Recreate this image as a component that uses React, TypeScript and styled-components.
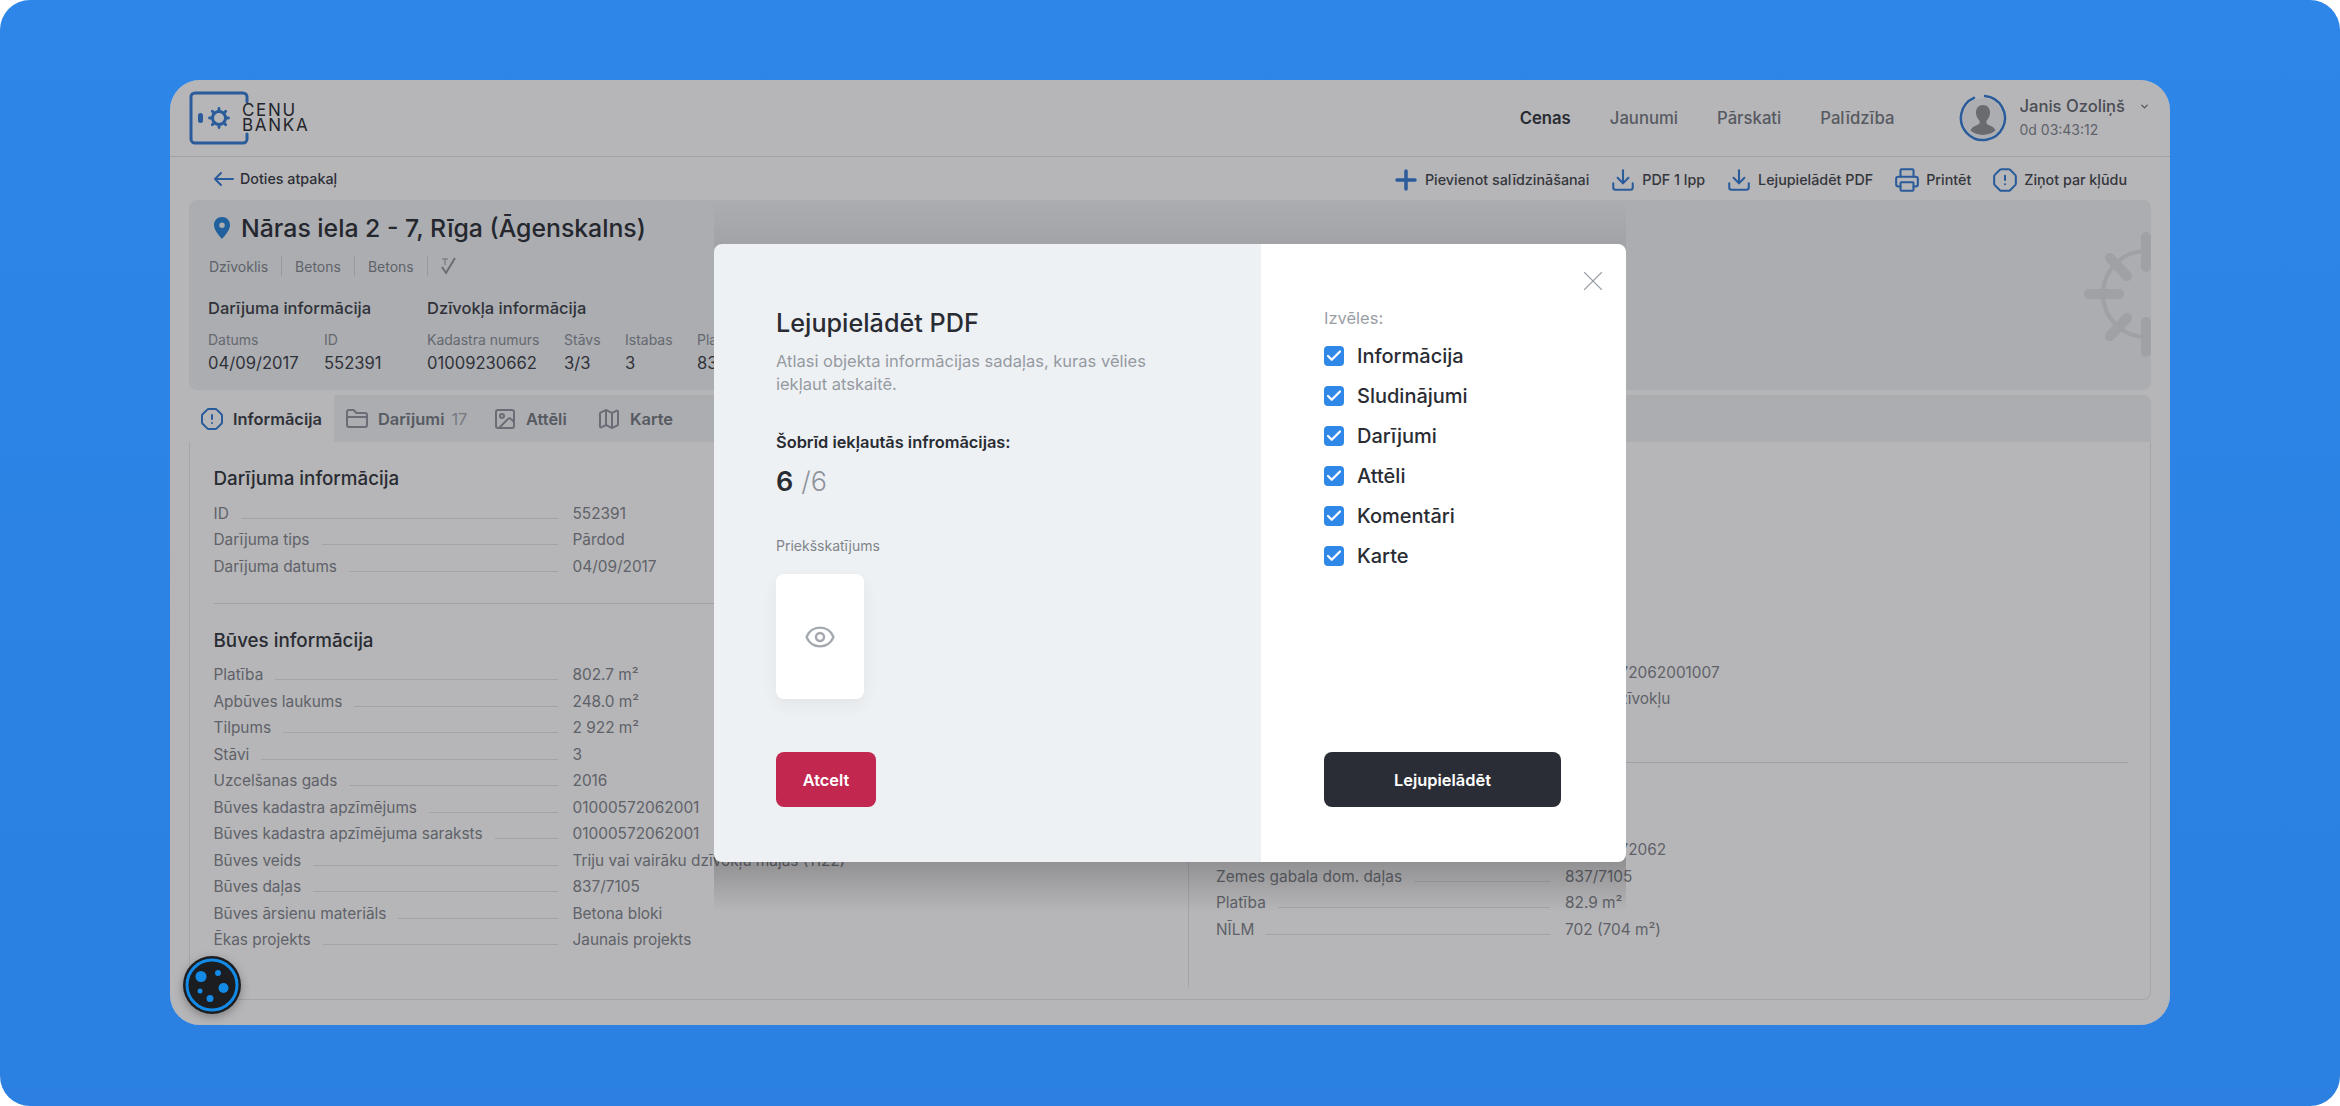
import { ReactNode } from 'react';
import styled, { createGlobalStyle } from 'styled-components';
import { Check, ChevronDown, Download, Eye, FolderClosed, Image, Map, OctagonAlert, Printer, X } from 'lucide-react';

const GlobalStyle = createGlobalStyle`
  html, body {
    margin: 0;
    background: #ffffff;
  }

  body {
    font-family: Inter, "Liberation Sans", sans-serif;
    color: #2a2d35;
  }

  * {
    box-sizing: border-box;
  }
`;

const Page = styled.div`
  width: 2340px;
  height: 1106px;
  padding: 80px 170px 81px;
  border-radius: 30px;
  background: linear-gradient(180deg, #2d86e8 0%, #2b80e1 100%);
  overflow: hidden;
`;

const Window = styled.div`
  position: relative;
  width: 2000px;
  height: 945px;
  display: flex;
  flex-direction: column;
  border-radius: 30px;
  background: #ffffff;
  overflow: hidden;
`;

const Header = styled.header`
  height: 77px;
  flex-shrink: 0;
  display: flex;
  align-items: center;
  padding: 0 20px 0 19px;
  border-bottom: 1px solid #dfe1e7;
`;

const Logo = styled.div`
  display: flex;
  align-items: center;
`;

const LogoWords = styled.div`
  margin-left: -7px;
  font-size: 17px;
  line-height: 15px;
  letter-spacing: 1.7px;
  color: #20232a;
`;

const Nav = styled.nav`
  margin-left: auto;
  display: flex;
  gap: 39px;
`;

const NavLink = styled.a<{ $active?: boolean }>`
  font-size: 16.7px;
  font-weight: ${props => (props.$active ? 600 : 500)};
  color: ${props => (props.$active ? '#2a2d35' : '#70747c')};
`;

const User = styled.div`
  margin-left: 65px;
  display: flex;
  align-items: center;
  gap: 12px;
`;

const UserText = styled.div`
  display: flex;
  flex-direction: column;
  gap: 5px;
`;

const UserName = styled.div`
  display: flex;
  align-items: center;
  gap: 14px;
  font-size: 16.6px;
  line-height: 19px;
  font-weight: 500;
  color: #5d6068;
`;

const UserTime = styled.div`
  font-size: 14px;
  line-height: 18px;
  color: #7e828a;
`;

const Toolbar = styled.div`
  height: 43px;
  flex-shrink: 0;
  display: flex;
  align-items: center;
  padding: 0 43px;
  font-size: 14.3px;
  font-weight: 500;
  color: #3a3d45;
`;

const BackLink = styled.a`
  display: flex;
  align-items: center;
  gap: 6px;
  color: #2f323a;
`;

const ToolbarActions = styled.div`
  margin-left: auto;
  padding-top: 2px;
  display: flex;
  align-items: center;
  gap: 21px;
`;

const ToolbarAction = styled.a`
  display: flex;
  align-items: center;
  gap: 6px;

  svg {
    color: #2b76d2;
  }
`;

const Hero = styled.section`
  position: relative;
  height: 190px;
  flex-shrink: 0;
  margin: 0 19px;
  padding: 12px 19px 0;
  border-radius: 8px;
  background: #eef1f4;
  overflow: hidden;
`;

const HeroDecor = styled.svg`
  position: absolute;
  top: 28px;
  right: 0;
`;

const HeroTitle = styled.h1`
  margin: 0;
  display: flex;
  align-items: center;
  gap: 10px;
  padding-left: 5px;
  font-size: 24.8px;
  line-height: 32px;
  font-weight: 500;
  color: #24272e;
`;

const TagRow = styled.div`
  margin-top: 12px;
  height: 20px;
  padding-left: 1px;
  display: flex;
  align-items: center;
  font-size: 14px;
  color: #7c8188;
`;

const Tag = styled.span`
  display: flex;
  align-items: center;
  height: 20px;
  padding-right: 13px;
  margin-right: 13px;
  border-right: 1px solid #cfd3d8;
`;

const HeroGroups = styled.div`
  margin-top: 22px;
  display: flex;
`;

const HeroGroup = styled.div<{ $width: number }>`
  width: ${props => props.$width}px;
  flex-shrink: 0;
`;

const HeroGroupTitle = styled.div`
  font-size: 16.5px;
  line-height: 20px;
  font-weight: 500;
  color: #343740;
`;

const HeroFacts = styled.div`
  margin-top: 13px;
  display: flex;
`;

const HeroFact = styled.div<{ $width: number }>`
  width: ${props => props.$width}px;
  flex-shrink: 0;
`;

const HeroLabel = styled.div`
  font-size: 14px;
  line-height: 18px;
  color: #858a91;
  white-space: nowrap;
`;

const HeroValue = styled.div`
  margin-top: 3px;
  font-size: 16.6px;
  line-height: 22px;
  color: #34373f;
  white-space: nowrap;
`;

const Panel = styled.section`
  flex: 1;
  margin: 5px 19px 25px;
  display: flex;
  flex-direction: column;
  border: 1px solid #e4e6ea;
  border-top: none;
  border-radius: 8px;
`;

const TabBar = styled.div`
  height: 47px;
  flex-shrink: 0;
  display: flex;
  margin: 0 -1px;
  border-radius: 8px 8px 0 0;
  background: #eef1f4;
  overflow: hidden;
`;

const Tab = styled.div<{ $active?: boolean; $width: number }>`
  width: ${props => props.$width}px;
  display: flex;
  align-items: center;
  gap: 9px;
  padding-left: 11px;
  font-size: 16.4px;
  font-weight: 600;
  color: ${props => (props.$active ? '#34373f' : '#70747c')};
  background: ${props => (props.$active ? '#ffffff' : 'transparent')};

  svg {
    color: ${props => (props.$active ? '#2b76d2' : '#8c9199')};
  }
`;

const TabCount = styled.span`
  margin-left: -2px;
  font-weight: 400;
  color: #a0a4aa;
`;

const Columns = styled.div`
  flex: 1;
  display: grid;
  grid-template-columns: 999px 1fr;
  padding-bottom: 12px;
`;

const Column = styled.div<{ $first?: boolean }>`
  padding: 0 ${props => (props.$first ? '24px' : '22px')} 0 ${props => (props.$first ? '23.5px' : '27px')};
  border-right: ${props => (props.$first ? '1px solid #e2e4e8' : 'none')};
`;

const Section = styled.div`
  padding: 23px 0;
  border-bottom: 1px solid #dcdee2;

  &:last-child {
    border-bottom: none;
  }
`;

const SectionTitle = styled.h2<{ $gap?: number }>`
  margin: 0 0 ${props => props.$gap ?? 7}px;
  font-size: 18.8px;
  line-height: 28px;
  font-weight: 500;
  color: #2a2d35;
`;

const Row = styled.div<{ $labelWidth: number }>`
  height: 26.5px;
  display: grid;
  grid-template-columns: ${props => props.$labelWidth}px 1fr;
  column-gap: 15px;
  align-items: center;
  font-size: 15.4px;
  color: #7c8087;
`;

const RowLabel = styled.div`
  display: flex;
  align-items: flex-end;
  gap: 12px;
  white-space: nowrap;
`;

const RowLeader = styled.span`
  flex: 1;
  height: 1px;
  margin-bottom: 4px;
  background: #e2e4e8;
`;

const RowValue = styled.div`
  white-space: nowrap;
`;

const Overlay = styled.div`
  position: absolute;
  inset: 0;
  padding-top: 1px;
  display: flex;
  align-items: center;
  justify-content: center;
  background: rgba(40, 42, 46, 0.34);
`;

const Modal = styled.div`
  position: relative;
  width: 912px;
  height: 618px;
  display: grid;
  grid-template-columns: 547px 365px;

  &::before {
    content: '';
    position: absolute;
    top: -44px;
    bottom: -50px;
    left: 0;
    right: 0;
    background: linear-gradient(180deg, rgba(0, 0, 0, 0) 0, rgba(0, 0, 0, 0.06) 44px, rgba(0, 0, 0, 0.2) 618px, rgba(0, 0, 0, 0.2) 662px, rgba(0, 0, 0, 0) 100%);
  }
`;

const ModalSide = styled.div<{ $tinted?: boolean }>`
  position: relative;
  display: flex;
  flex-direction: column;
  padding: 64px 65px 55px ${props => (props.$tinted ? 62 : 63)}px;
  background: ${props => (props.$tinted ? '#eef1f4' : '#ffffff')};
  border-radius: ${props => (props.$tinted ? '8px 0 0 8px' : '0 8px 8px 0')};
`;

const CloseButton = styled.button`
  position: absolute;
  top: 20px;
  right: 16px;
  width: 34px;
  height: 34px;
  padding: 0;
  display: flex;
  align-items: center;
  justify-content: center;
  border: none;
  background: none;
  color: #9ba0a6;
`;

const ModalTitle = styled.h2`
  margin: 0;
  font-size: 25.2px;
  line-height: 30px;
  font-weight: 500;
  color: #292c33;
`;

const ModalText = styled.p`
  margin: 12px 0 0;
  width: 410px;
  font-size: 16.5px;
  line-height: 23px;
  color: #959aa1;
`;

const IncludedLabel = styled.div`
  margin-top: 35px;
  font-size: 16.4px;
  line-height: 22px;
  font-weight: 600;
  color: #292c33;
`;

const IncludedCount = styled.div`
  margin-top: 12px;
  font-size: 27px;
  line-height: 34px;
  font-weight: 600;
  color: #292c33;

  span {
    margin-left: 8px;
    font-weight: 300;
    color: #8f949b;
  }
`;

const PreviewLabel = styled.div`
  margin-top: 38px;
  font-size: 14px;
  line-height: 18px;
  color: #7f848b;
`;

const PreviewCard = styled.div`
  margin-top: 19px;
  width: 88px;
  height: 125px;
  display: flex;
  align-items: center;
  justify-content: center;
  border-radius: 8px;
  background: #ffffff;
  box-shadow: 0 6px 16px rgba(40, 44, 52, 0.06);
  color: #a3a8ae;
`;

const ModalButton = styled.button<{ $color: string; $width: number }>`
  margin-top: auto;
  width: ${props => props.$width}px;
  height: 55px;
  border: none;
  border-radius: 8px;
  background: ${props => props.$color};
  color: #ffffff;
  font-family: inherit;
  font-size: 16.4px;
  font-weight: 600;
`;

const OptionsLabel = styled.div`
  font-size: 16.5px;
  line-height: 20px;
  color: #9a9ea5;
`;

const Options = styled.div`
  margin-top: 8px;
  display: flex;
  flex-direction: column;
`;

const Option = styled.label`
  height: 40px;
  display: flex;
  align-items: center;
  gap: 13px;
  font-size: 20px;
  font-weight: 500;
  color: #292c33;
`;

const OptionBox = styled.span`
  width: 20px;
  height: 20px;
  display: flex;
  align-items: center;
  justify-content: center;
  border-radius: 4px;
  background: #2f88e8;
  color: #ffffff;
`;

const CookieBadge = styled.div`
  position: absolute;
  left: 13px;
  bottom: 11px;
  width: 58px;
  height: 58px;
  border-radius: 50%;
  background: #1c1d20;
  box-shadow: 0 3px 10px rgba(0, 0, 0, 0.3);
`;

function LogoMark() {
  return (
    <svg width="60" height="54" viewBox="0 0 60 54" fill="none">
      <path d="M58 11V6a4 4 0 0 0-4-4H6a4 4 0 0 0-4 4v42a4 4 0 0 0 4 4h48a4 4 0 0 0 4-4v-5" stroke="#2b76d2" strokeWidth="3" strokeLinecap="round" />
      <rect x="9" y="22" width="5" height="10" rx="2.5" fill="#2b76d2" />
      <g stroke="#2b76d2" strokeLinecap="round">
        <circle cx="30" cy="27" r="6.500" strokeWidth="3" />
        <path strokeWidth="2.800" d="M30 17.500v2M30 34.500v2M20.500 27h2M37.500 27h2M23.300 20.300l1.400 1.400M35.300 32.300l1.400 1.400M36.700 20.300l-1.400 1.400M24.700 32.300l-1.400 1.400" />
      </g>
    </svg>
  );
}

function Avatar() {
  return (
    <svg width="48" height="48" viewBox="0 0 48 48" fill="none">
      <circle cx="24" cy="24" r="20" fill="#eef1f4" />
      <path d="M24 11c-4.500 0-7 3.400-7 7.500 0 3.500 1.600 6.500 3.500 8v3c-1.500 2-7.500 2.500-9 7a20 20 0 0 0 25 0c-1.500-4.500-7.500-5-9-7v-3c1.900-1.500 3.500-4.500 3.500-8 0-4.100-2.500-7.500-7-7.500z" fill="#8a8d91" />
      <path d="M26 2.100A22 22 0 1 1 15 3.900" stroke="#2b76d2" strokeWidth="2.500" strokeLinecap="round" />
    </svg>
  );
}

function BackArrow() {
  return (
    <svg width="21" height="16" viewBox="0 0 21 16" fill="none" stroke="#2b76d2" strokeWidth="2" strokeLinecap="round" strokeLinejoin="round">
      <path d="M20 8H2M8 2L2 8l6 6" />
    </svg>
  );
}

function PlusMark() {
  return (
    <svg width="26" height="26" viewBox="0 0 26 26" fill="none" stroke="currentColor" strokeWidth="3.500" strokeLinecap="round">
      <path d="M13 4v18M4 13h18" />
    </svg>
  );
}

function PinIcon() {
  return (
    <svg width="18" height="24" viewBox="0 0 18 24">
      <path fillRule="evenodd" clipRule="evenodd" d="M9 1c4.600 0 8 3.500 8 8 0 5-4.800 10.500-8 14-3.200-3.500-8-9-8-14 0-4.500 3.400-8 8-8zm0 5.500A2.700 2.700 0 1 0 9 12a2.700 2.700 0 0 0 0-5.500z" fill="#1c7ed6" />
    </svg>
  );
}

function VerifiedMark() {
  return (
    <svg width="16" height="18" viewBox="0 0 16 18" fill="none" stroke="#8d9197">
      <path d="M1 2h6M4 2v6" strokeWidth="1" />
      <path d="M1 10l4 6 9-15" strokeWidth="2" />
    </svg>
  );
}

function WheelDecor() {
  return (
    <HeroDecor width="71" height="134" viewBox="0 0 71 134" fill="none" stroke="#dcdfe2" strokeLinecap="round">
      <circle cx="66" cy="66" r="43" strokeWidth="4" />
      <g strokeWidth="10">
        <path d="M66 9v30M66 94v30M9 66h30M30 30l17 18M47 90l-17 18" />
      </g>
    </HeroDecor>
  );
}

function CookieMark() {
  return (
    <svg width="58" height="58" viewBox="0 0 58 58" fill="#138ae6">
      <circle cx="29" cy="29" r="25" fill="none" stroke="#138ae6" strokeWidth="3" />
      <circle cx="18" cy="20.500" r="5.500" />
      <circle cx="35" cy="17" r="3" />
      <circle cx="40.500" cy="32" r="5" />
      <circle cx="17" cy="35" r="2.500" />
      <circle cx="27" cy="42.500" r="3.500" />
    </svg>
  );
}

interface FactRow {
  label: string;
  value: ReactNode;
}

const dealRows: FactRow[] = [
  { label: 'ID', value: '552391' },
  { label: 'Darījuma tips', value: 'Pārdod' },
  { label: 'Darījuma datums', value: '04/09/2017' },
];

const buildingRows: FactRow[] = [
  { label: 'Platība', value: '802.7 m²' },
  { label: 'Apbūves laukums', value: '248.0 m²' },
  { label: 'Tilpums', value: '2 922 m²' },
  { label: 'Stāvi', value: '3' },
  { label: 'Uzcelšanas gads', value: '2016' },
  { label: 'Būves kadastra apzīmējums', value: '01000572062001' },
  { label: 'Būves kadastra apzīmējuma saraksts', value: '01000572062001' },
  { label: 'Būves veids', value: 'Triju vai vairāku dzīvokļu mājas (1122)' },
  { label: 'Būves daļas', value: '837/7105' },
  { label: 'Būves ārsienu materiāls', value: 'Betona bloki' },
  { label: 'Ēkas projekts', value: 'Jaunais projekts' },
];

const flatRows: FactRow[] = [
  { label: 'Adrese', value: 'Rīga' },
  { label: 'Stāvs', value: '3/3' },
  { label: 'Istabas', value: '3' },
  { label: 'Platība', value: '83 m²' },
  { label: 'Dzīvokļa daļas', value: '837' },
  { label: 'Kopējā platība', value: '83 m²' },
  { label: 'Telpu grupas kadastra apzīmējums', value: '01000572062001007' },
  { label: 'Telpu grupas lietošanas veids', value: 'Piecu dzīvokļu' },
  { label: 'Telpu skaits', value: '3' },
];

const landRows: FactRow[] = [
  { label: 'Zemes kadastra numurs', value: '01000572062' },
  { label: 'Zemes gabala dom. daļas', value: '837/7105' },
  { label: 'Platība', value: '82.9 m²' },
  { label: 'NĪLM', value: '702 (704 m²)' },
];

const options = ['Informācija', 'Sludinājumi', 'Darījumi', 'Attēli', 'Komentāri', 'Karte'];

function Facts({ rows, labelWidth }: { rows: FactRow[]; labelWidth: number }) {
  return (
    <>
      {rows.map(row => (
        <Row key={row.label} $labelWidth={labelWidth}>
          <RowLabel>
            {row.label}
            <RowLeader />
          </RowLabel>
          <RowValue>{row.value}</RowValue>
        </Row>
      ))}
    </>
  );
}

export default function App() {
  return (
    <Page>
      <GlobalStyle />
      <Window>
        <Header>
          <Logo>
            <LogoMark />
            <LogoWords>
              CENU
              <br />
              BANKA
            </LogoWords>
          </Logo>
          <Nav>
            <NavLink $active>Cenas</NavLink>
            <NavLink>Jaunumi</NavLink>
            <NavLink>Pārskati</NavLink>
            <NavLink>Palīdzība</NavLink>
          </Nav>
          <User>
            <Avatar />
            <UserText>
              <UserName>
                Janis Ozoliņš
                <ChevronDown size={11} strokeWidth={2.5} />
              </UserName>
              <UserTime>0d 03:43:12</UserTime>
            </UserText>
          </User>
        </Header>

        <Toolbar>
          <BackLink>
            <BackArrow />
            Doties atpakaļ
          </BackLink>
          <ToolbarActions>
            <ToolbarAction>
              <PlusMark />
              Pievienot salīdzināšanai
            </ToolbarAction>
            <ToolbarAction>
              <Download size={26} strokeWidth={1.9} />
              PDF 1 lpp
            </ToolbarAction>
            <ToolbarAction>
              <Download size={26} strokeWidth={1.9} />
              Lejupielādēt PDF
            </ToolbarAction>
            <ToolbarAction>
              <Printer size={26} strokeWidth={1.9} />
              Printēt
            </ToolbarAction>
            <ToolbarAction>
              <OctagonAlert size={26} strokeWidth={1.9} />
              Ziņot par kļūdu
            </ToolbarAction>
          </ToolbarActions>
        </Toolbar>

        <Hero>
          <HeroTitle>
            <PinIcon />
            Nāras iela 2 - 7, Rīga (Āgenskalns)
          </HeroTitle>
          <TagRow>
            <Tag>Dzīvoklis</Tag>
            <Tag>Betons</Tag>
            <Tag>Betons</Tag>
            <VerifiedMark />
          </TagRow>
          <HeroGroups>
            <HeroGroup $width={219}>
              <HeroGroupTitle>Darījuma informācija</HeroGroupTitle>
              <HeroFacts>
                <HeroFact $width={116}>
                  <HeroLabel>Datums</HeroLabel>
                  <HeroValue>04/09/2017</HeroValue>
                </HeroFact>
                <HeroFact $width={100}>
                  <HeroLabel>ID</HeroLabel>
                  <HeroValue>552391</HeroValue>
                </HeroFact>
              </HeroFacts>
            </HeroGroup>
            <HeroGroup $width={400}>
              <HeroGroupTitle>Dzīvokļa informācija</HeroGroupTitle>
              <HeroFacts>
                <HeroFact $width={137}>
                  <HeroLabel>Kadastra numurs</HeroLabel>
                  <HeroValue>01009230662</HeroValue>
                </HeroFact>
                <HeroFact $width={61}>
                  <HeroLabel>Stāvs</HeroLabel>
                  <HeroValue>3/3</HeroValue>
                </HeroFact>
                <HeroFact $width={72}>
                  <HeroLabel>Istabas</HeroLabel>
                  <HeroValue>3</HeroValue>
                </HeroFact>
                <HeroFact $width={80}>
                  <HeroLabel>Platība</HeroLabel>
                  <HeroValue>83 m²</HeroValue>
                </HeroFact>
              </HeroFacts>
            </HeroGroup>
          </HeroGroups>
          <WheelDecor />
        </Hero>

        <Panel>
          <TabBar>
            <Tab $active $width={145}>
              <OctagonAlert size={24} strokeWidth={2} />
              Informācija
            </Tab>
            <Tab $width={148}>
              <FolderClosed size={24} strokeWidth={2} />
              Darījumi
              <TabCount>17</TabCount>
            </Tab>
            <Tab $width={104}>
              <Image size={24} strokeWidth={2} />
              Attēli
            </Tab>
            <Tab $width={100}>
              <Map size={24} strokeWidth={2} />
              Karte
            </Tab>
          </TabBar>
          <Columns>
            <Column $first>
              <Section>
                <SectionTitle>Darījuma informācija</SectionTitle>
                <Facts rows={dealRows} labelWidth={344} />
              </Section>
              <Section>
                <SectionTitle>Būves informācija</SectionTitle>
                <Facts rows={buildingRows} labelWidth={344} />
              </Section>
            </Column>
            <Column>
              <Section>
                <SectionTitle>Dzīvoklis</SectionTitle>
                <Facts rows={flatRows} labelWidth={334} />
              </Section>
              <Section>
                <SectionTitle $gap={23}>Zeme</SectionTitle>
                <Facts rows={landRows} labelWidth={334} />
              </Section>
            </Column>
          </Columns>
        </Panel>

        <Overlay>
          <Modal>
            <ModalSide $tinted>
              <ModalTitle>Lejupielādēt PDF</ModalTitle>
              <ModalText>Atlasi objekta informācijas sadaļas, kuras vēlies iekļaut atskaitē.</ModalText>
              <IncludedLabel>Šobrīd iekļautās infromācijas:</IncludedLabel>
              <IncludedCount>
                6<span>/6</span>
              </IncludedCount>
              <PreviewLabel>Priekšskatījums</PreviewLabel>
              <PreviewCard>
                <Eye size={32} strokeWidth={1.8} />
              </PreviewCard>
              <ModalButton $color="#c2274f" $width={100}>Atcelt</ModalButton>
            </ModalSide>
            <ModalSide>
              <CloseButton>
                <X size={34} strokeWidth={0.8} />
              </CloseButton>
              <OptionsLabel>Izvēles:</OptionsLabel>
              <Options>
                {options.map(option => (
                  <Option key={option}>
                    <OptionBox>
                      <Check size={18} strokeWidth={3} />
                    </OptionBox>
                    {option}
                  </Option>
                ))}
              </Options>
              <ModalButton $color="#2a2d35" $width={237}>Lejupielādēt</ModalButton>
            </ModalSide>
          </Modal>
        </Overlay>

        <CookieBadge>
          <CookieMark />
        </CookieBadge>
      </Window>
    </Page>
  );
}
